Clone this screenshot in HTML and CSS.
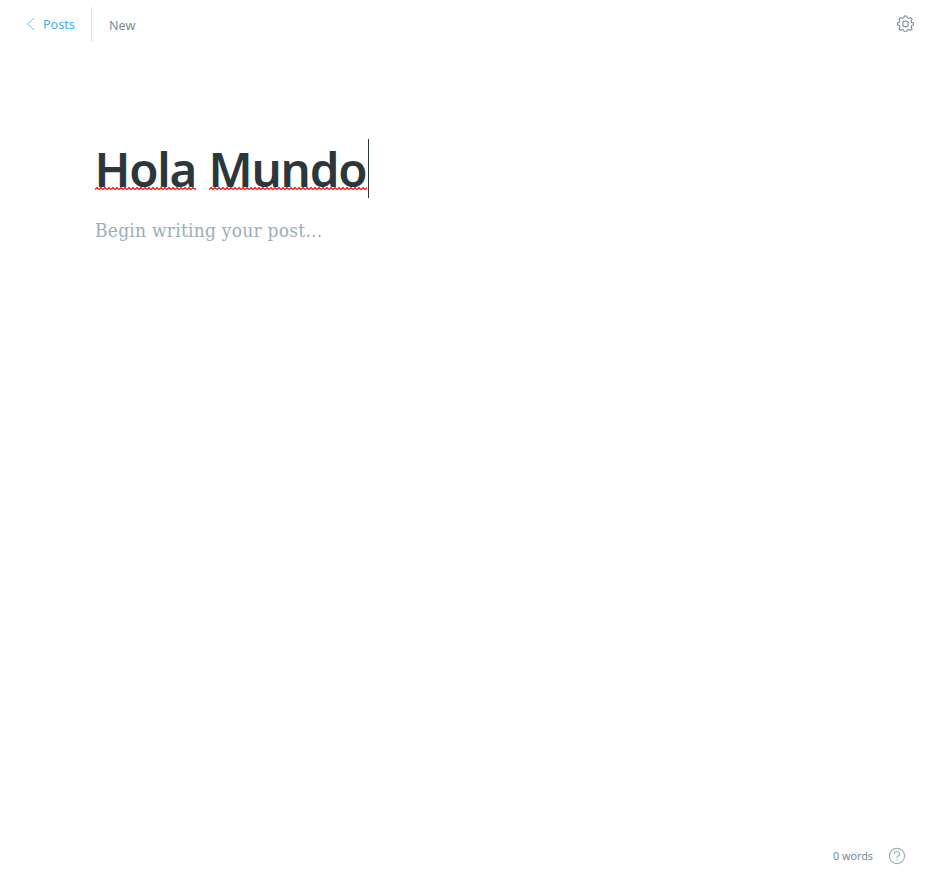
FILE: index.html
```html
<!DOCTYPE html>
<html lang="en">
<head>
<meta charset="utf-8">
<title>New post</title>
<link rel="stylesheet" href="styles.css">
</head>
<body>
<div class="editor">
  <header class="bar">
    <a class="back"><svg width="9" height="14" viewBox="0 0 9 14"><path d="M8.300 1 1.600 7l6.700 6"/></svg><span>Posts</span></a>
    <span class="status">New</span>
    <svg class="gear" width="18" height="18" viewBox="0 0 18 18"><path d="M7.200 2.900 7.800 1h2.400l.6 1.900 1.600.7 1.900-.9 1.600 1.700-.9 1.800.6 1.600 1.900.6v2.100l-1.900.6-.6 1.700.9 1.800-1.600 1.600-1.900-.8-1.600.6-.6 2H7.800l-.6-2-1.600-.6-1.900.8-1.600-1.600.9-1.800-.6-1.700-1.900-.6V8.400l1.900-.6L3 6.200l-.9-1.800 1.600-1.700 1.900.9z"/><circle cx="9" cy="9.400" r="3"/></svg>
  </header>
  <main class="post">
    <h1 class="title"><span class="word first">Hola<svg class="squiggle"><defs><pattern id="wave" width="4" height="3" patternUnits="userSpaceOnUse"><path d="M-1 1.500 0 2.500 2 .5 4 2.500 5 1.500"/></pattern></defs><rect width="100%" height="3" fill="url(#wave)"/></svg></span><span class="word second">Mundo<svg class="squiggle"><rect width="100%" height="3" fill="url(#wave)"/></svg></span><span class="caret"></span></h1>
    <p class="placeholder">Begin writing your post...</p>
  </main>
  <footer class="foot">
    <span class="count">0 words</span>
    <svg class="help" width="18" height="18" viewBox="0 0 18 18"><circle cx="9" cy="9" r="7.600"/><path d="M6.300 7.200v-.3a2.600 2.400 0 1 1 3.700 2.200c-.7.3-1 .7-1 1.400v.5M9 12.300v1.200"/></svg>
  </footer>
</div>
</body>
</html>
```
FILE: styles.css
```css
* { box-sizing: border-box; }
body { margin: 0; background: #fff; font-family: "Noto Sans", sans-serif; }
svg { fill: none; display: block; flex: none; }
.editor { width: 929px; height: 888px; display: flex; flex-direction: column; }
.bar { height: 48px; padding: 7px 14px 6px 26px; display: flex; align-items: center; }
.back { display: flex; align-items: center; gap: 8px; width: 66px; height: 35px; border-right: 1px solid #dfe5e9; color: #3eb0ef; }
.back svg { margin-top: -2px; stroke: #6fc3f3; stroke-width: 1; }
.back span { font-size: 12.6px; }
.status { margin: 2px auto 0 17px; color: #738a94; font-size: 12.6px; }
.gear { width: 17px; height: 17px; margin: 0 .6px 2px 0; stroke: #738a94; stroke-width: 1.1; }
.post { flex: 1; padding: 91px 95px 0; }
.title { margin: 0; height: 59px; display: flex; font-size: 47.5px; line-height: 59px; font-weight: 560; color: #2b373d; }
.word { position: relative; white-space: nowrap; height: 59px; }
.first { width: 101px; margin-right: 13px; letter-spacing: -1.2px; text-indent: -.5px; }
.second { width: 158px; letter-spacing: -1.2px; text-indent: -.5px; }
.squiggle { position: absolute; left: 0; top: 48px; width: 100%; height: 3px; }
.squiggle path { stroke: #f00; stroke-width: 1.1; }
.caret { width: 1px; height: 59px; margin-left: 1px; background: #2b373d; }
.placeholder { margin: 17px 0 0; font: 19px/30px "DejaVu Serif Condensed", "DejaVu Serif", serif; font-stretch: condensed; letter-spacing: .24px; color: #9baeb8; }
.foot { height: 64px; padding: 0 23px 0 0; display: flex; justify-content: flex-end; align-items: center; gap: 15px; font-size: 10.8px; color: #738a94; }
.count { margin-top: -2px; }
.help { stroke: #9baeb8; stroke-width: 1.1; }
```
